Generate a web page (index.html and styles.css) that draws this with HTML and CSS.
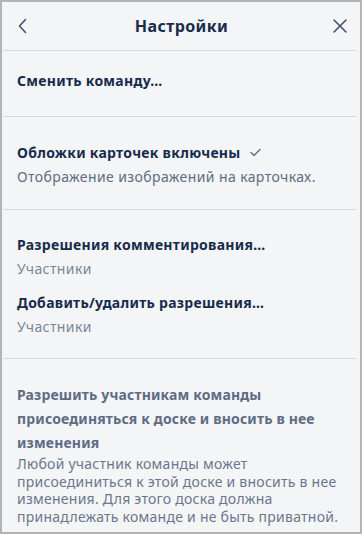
FILE: index.html
```html
<!DOCTYPE html>
<html lang="ru">
<head>
<meta charset="utf-8">
<link rel="stylesheet" href="styles.css">
</head>
<body>
<div class="panel">
  <header class="header">
    <button class="icon-btn back" aria-label="Назад">
      <svg width="10" height="16" viewBox="0 0 10 16"><path d="M7.5 1.5 L1.5 8 L7.5 14.5" fill="none" stroke="#42526e" stroke-width="1.6" stroke-linecap="round" stroke-linejoin="round"/></svg>
    </button>
    <h1 class="title">Настройки</h1>
    <button class="icon-btn close" aria-label="Закрыть">
      <svg width="14" height="14" viewBox="0 0 14 14"><path d="M1 1 L13 13 M13 1 L1 13" fill="none" stroke="#42526e" stroke-width="1.6" stroke-linecap="round"/></svg>
    </button>
  </header>
  <div class="divider"></div>
  <section class="section s1">
    <div class="item-title">Сменить команду…</div>
  </section>
  <div class="divider"></div>
  <section class="section s2">
    <div class="item-title">Обложки карточек включены <svg class="check" width="11" height="9" viewBox="0 0 11 9"><path d="M1 4.5 L4 7.5 L10 1.5" fill="none" stroke="#5e6c84" stroke-width="1.3" stroke-linecap="round" stroke-linejoin="round"/></svg></div>
    <div class="item-sub">Отображение изображений на карточках.</div>
  </section>
  <div class="divider"></div>
  <section class="section s3">
    <div class="item">
      <div class="item-title">Разрешения комментирования…</div>
      <div class="item-sub light">Участники</div>
    </div>
    <div class="item">
      <div class="item-title">Добавить/удалить разрешения…</div>
      <div class="item-sub light">Участники</div>
    </div>
  </section>
  <div class="divider"></div>
  <section class="section s4">
    <div class="item-title muted">Разрешить участникам команды присоединяться к доске и вносить в нее изменения</div>
    <div class="desc">Любой участник команды может присоединиться к этой доске и вносить в нее изменения. Для этого доска должна принадлежать команде и не быть приватной.</div>
  </section>
</div>
</body>
</html>
```
FILE: styles.css
```css
* { box-sizing: border-box; }
html, body { margin: 0; padding: 0; }
body {
  width: 362px;
  height: 534px;
  overflow: hidden;
  font-family: "Noto Sans", "Open Sans", sans-serif;
  background: #f4f5f7;
}
.panel {
  width: 362px;
  height: 534px;
  border: 2px solid #b4b4b4;
  background: #f4f5f7;
  overflow: hidden;
  display: flex;
  flex-direction: column;
}
.header {
  height: 48px;
  display: flex;
  align-items: center;
  justify-content: space-between;
  padding: 0 10px 0 11px;
}
.icon-btn {
  background: none;
  border: 0;
  padding: 0;
  width: 20px;
  height: 20px;
  display: flex;
  align-items: center;
  justify-content: center;
}
.title {
  margin: 0;
  font-size: 16px;
  font-weight: 700;
  color: #172b4d;
  line-height: 20px;
  letter-spacing: 0.4px;
}
.divider {
  height: 1px;
  background: #d3d7de;
  margin: 0 4px 0 1px;
  flex: none;
}
.section {
  padding: 0 10px 0 15px;
}
.s1 { padding-top: 20px; padding-bottom: 25px; }
.s2 { padding-top: 24px; padding-bottom: 20px; }
.s3 { padding-top: 23px; padding-bottom: 19px; display: flex; flex-direction: column; gap: 10px; }
.s4 { padding-top: 24px; }
.item-title {
  font-size: 14px;
  font-weight: 700;
  color: #172b4d;
  line-height: 24px;
  letter-spacing: 0.28px;
}
.s1 .item-title { line-height: 20px; }
.item-title.muted { color: #5e6c84; letter-spacing: 0.15px; }
.check { vertical-align: 1px; margin-left: 6px; }
.item-sub {
  font-size: 14px;
  color: #5e6c84;
  line-height: 24px;
  letter-spacing: 0.4px;
}
.item-sub.light { color: #7a869a; }
.desc {
  font-size: 14px;
  color: #6b778c;
  line-height: 17.5px;
  letter-spacing: 0.25px;
}
```
